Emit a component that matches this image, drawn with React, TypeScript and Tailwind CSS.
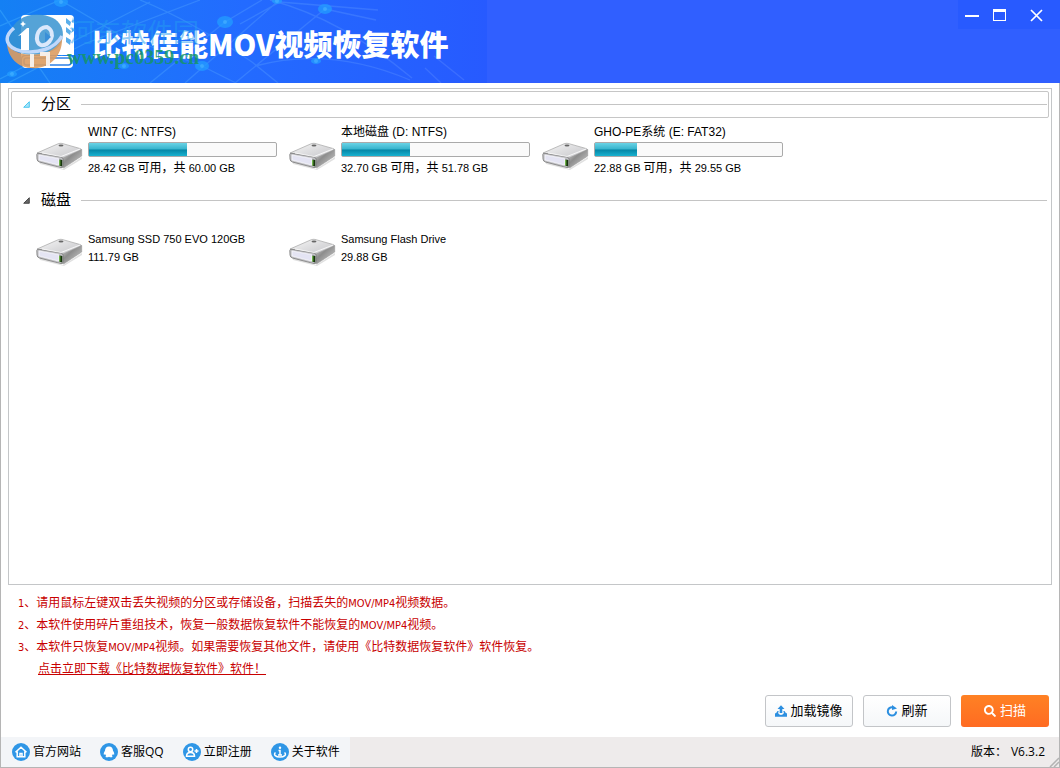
import React, { useState } from "react";
import { FaSearch } from "react-icons/fa";

const SANS = "font-['Liberation_Sans','Noto_Sans_CJK_SC',sans-serif]";
const UI = "font-['Open_Sans','Noto_Sans_CJK_SC',sans-serif]";

function Network() {
  const nodes = [
    [61, 2, 7], [124, 66, 5], [225, 22, 8], [202, 66, 7], [277, 1, 5], [325, 9, 7], [316, 61, 5], [12, 74, 5],
  ];
  return (
    <svg className="absolute inset-y-0 left-0 h-full w-[487px]" viewBox="0 0 487 83" fill="none" aria-hidden="true">
      <defs>
        <linearGradient id="fade" x1="0" x2="1">
          <stop offset="0" stopColor="#45b4ff" stopOpacity=".4" />
          <stop offset="1" stopColor="#6a94ff" stopOpacity=".3" />
        </linearGradient>
      </defs>
      <path
        stroke="url(#fade)"
        strokeWidth="1.3"
        d="M0 26L60 0M0 79L150 2M8 83L84 44L200 0M60 0L118 34L202 66L236 83M140 0Q190 20 252 62L278 83M150 83L225 22L262 0M185 83L277 2M235 83L325 9M270 0Q340 18 412 78M240 24L280 2L378 10M255 66Q330 46 410 80M325 9L376 20M425 68L441 83M434 56L464 80M0 10L50 83"
      />
      {nodes.map(([x, y, r]) => (
        <g key={x}>
          <ellipse cx={x} cy={y} rx={r} ry={r - 2} fill="#239cff" fillOpacity=".75" />
          <circle cx={x} cy={y} r="2" fill="#52bcff" fillOpacity=".5" />
        </g>
      ))}
    </svg>
  );
}

function Logo() {
  return (
    <svg className="h-[60px] w-[72px] shrink-0" viewBox="0 0 72 60" fill="none" aria-hidden="true">
      <path d="M20 1h45a4 4 0 0 1 4 4v36H20a4 4 0 0 0-4 4V5a4 4 0 0 1 4-4Z" fill="#fff" />
      <rect x="17" y="42" width="51" height="12" rx="4" fill="#fff" />
      <rect x="19" y="44" width="47" height="7" rx="2.500" fill="#fff" stroke="#2d80e6" strokeWidth="1.500" />
      <path d="M5 20C9 2 30-4 48 4c11 6 12 18 7 27-8 12-38 13-50 3-2-4-1-9 0-14Z" fill="#3793d0" fillOpacity=".85" />
      <path d="M2 30c6 10 22 13 38 9 9-3 15-9 17-16 1 15-8 29-25 31C14 56 3 44 2 30Z" fill="#dc9c62" fillOpacity=".9" />
      <path d="M9 14C-3 24 2 34 16 37c16 3 34-2 41-15" stroke="#c0d8fb" strokeWidth="3.500" />
      <path d="M24 14v22h-8V21l-3 1 9-8Z" fill="#fff" />
      <path d="M42 13c-11 0-13 16-6 18 9 2 16-13 6-18Z" stroke="#dbe8fb" strokeWidth="4" />
      <path d="M40 18v10l6-5Z" fill="#3a8fd8" />
      <path d="M27 40v13M35 40h8v12" stroke="#f6eee8" strokeWidth="4" />
      <path d="m18 7 1 2 2 1-2 1-1 2-1-2-2-1 2-1Z" fill="#fff" />
      <path d="m61 4 5 4-1 4-4-3Zm7-1-1 6 2-2Zm-7 10 5 4-1 4-4-3Zm7 0-2 6 3-2Zm-7 10 5 3-1 5-4-3Z" fill="#5aaeea" />
    </svg>
  );
}

function DriveIcon() {
  return (
    <svg className="h-[28px] w-[48px] shrink-0" viewBox="0 0 48 28" aria-hidden="true">
      <defs>
        <linearGradient id="driveTop" x1="0" y1="0" x2="1" y2="1">
          <stop offset="0" stopColor="#f7f7f7" />
          <stop offset=".5" stopColor="#dcdcde" />
          <stop offset="1" stopColor="#c4c4c8" />
        </linearGradient>
        <linearGradient id="driveSide" x1="0" y1="0" x2="1" y2="1">
          <stop offset="0" stopColor="#e8e8e8" />
          <stop offset=".4" stopColor="#8c8c8c" />
          <stop offset="1" stopColor="#d4d4d4" />
        </linearGradient>
      </defs>
      <path d="M3 19 27 27 46 15v2L28 28 4 22Z" fill="#000" fillOpacity=".12" />
      <path d="M1 11 22 1.800Q24 1 26 1.400L44 6.500q2 .5 1 2L27 17Z" fill="url(#driveTop)" stroke="#a5a5a5" strokeWidth=".7" />
      <path d="M26 16.500 45.700 7.500V14L27.500 26Z" fill="url(#driveSide)" stroke="#999" strokeWidth=".6" />
      <path d="M.8 12.500Q.8 11 3 11.300L25 15q2.200.5 2.200 2.500V24q0 2-2.200 1.600L3.500 20Q1.200 19.500 1 17Z" fill="#c3c3c7" stroke="#777" strokeWidth=".8" />
      <path d="M3 13 22.500 16.500V23L3 18Z" fill="#e4e4f3" stroke="#fafaff" strokeWidth=".7" />
      <path d="M23.500 17.500 26.300 18v6.500l-2.800-.7Z" fill="#17340f" />
      <path d="M23.800 18v5.500" stroke="#6fc341" strokeWidth="1.100" />
      <ellipse cx="25" cy="3.500" rx="2.500" ry="1" fill="#666" />
      <path d="m6 11 19 3.500L44 7" stroke="#fff" strokeOpacity=".8" fill="none" />
    </svg>
  );
}

function Section({ title, active, children }: { title: string; active?: boolean; children: React.ReactNode }) {
  const [open, setOpen] = useState(true);
  return (
    <section>
      <button
        type="button"
        aria-expanded={open}
        onClick={() => setOpen(!open)}
        className={
          active
            ? "flex h-[27px] w-full items-center rounded-[2px] border border-[#c6c6c6] bg-white pl-[11px] text-left"
            : "flex h-[27px] w-full items-center border border-transparent pl-[11px] text-left"
        }
      >
        <svg className="h-[7px] w-[7px]" viewBox="0 0 7 7" aria-hidden="true">
          <path d="M6.300.7v5.600H.7Z" fill={active ? "#a8e4fa" : "#686868"} stroke={active ? "#29bdec" : "#303030"} strokeWidth=".8" />
        </svg>
        <span className="ml-[11px] w-10 pb-0.5 text-[15px] leading-5 text-black">{title}</span>
        <span className="mr-px h-px flex-1 bg-[#c4c4c4]" />
      </button>
      {open && children}
    </section>
  );
}

const partitions = [
  { name: "WIN7 (C: NTFS)", free: "28.42 GB", total: "60.00 GB", used: 52.5 },
  { name: "本地磁盘 (D: NTFS)", free: "32.70 GB", total: "51.78 GB", used: 36.5 },
  { name: "GHO-PE系统 (E: FAT32)", free: "22.88 GB", total: "29.55 GB", used: 22.5 },
];

const disks = [
  { name: "Samsung SSD 750 EVO 120GB", size: "111.79 GB" },
  { name: "Samsung Flash Drive", size: "29.88 GB" },
];

function Latin({ children }: { children: React.ReactNode }) {
  return <span className="font-['DejaVu_Sans_Condensed','Noto_Sans',sans-serif] text-[11px] leading-none">{children}</span>;
}

function Badge({ children }: { children: React.ReactNode }) {
  return (
    <svg className="h-[18px] w-[18px]" viewBox="0 0 18 18" fill="none" aria-hidden="true">
      <circle cx="9" cy="9" r="9" fill="#2f96e6" />
      {children}
    </svg>
  );
}

const links = [
  {
    label: "官方网站",
    icon: <path d="m3.500 9.300 5.500-5 5.500 5M5.200 8.500v5.300h7.600V8.500M8 13.500v-3h2v3" stroke="#fff" strokeWidth="1.500" />,
  },
  {
    label: "客服QQ",
    icon: <path d="M9 3.500c-2.800 0-4 2-4 4.300-.9 1.300-1.600 3-1.100 4 .4.200.9-.3 1.200-.7.200.8.600 1.300 1.100 1.800-.8.300-1 1-.2 1.300 1 .3 2.200.1 3-.4.800.5 2 .7 3 .4.800-.3.600-1-.2-1.300.5-.5.900-1 1.100-1.800.3.400.8.900 1.200.7.500-1-.2-2.700-1.100-4 0-2.300-1.200-4.300-4-4.300Z" fill="#fff" />,
  },
  {
    label: "立即注册",
    icon: (
      <>
        <circle cx="7.500" cy="6.500" r="2.200" stroke="#fff" strokeWidth="1.500" />
        <path d="M3.500 13.200c0-2.600 1.500-3.700 4-3.700s4 1.100 4 3.700ZM11.500 8h4M13.500 6v4" stroke="#fff" strokeWidth="1.500" />
      </>
    ),
  },
  {
    label: "关于软件",
    icon: (
      <>
        <circle cx="9" cy="4.700" r="1.200" fill="#fff" />
        <path d="M7.500 7.500H9V12m-2 0h4M4.500 9.500c-2.500 2.300.3 4.500 4.500 4.500s7-2.200 4.500-4.500" stroke="#fff" strokeWidth="1.500" />
      </>
    ),
  },
];

const plainButton =
  "flex h-8 w-[88px] items-center justify-center rounded-[3px] border border-[#c3c5c8] bg-linear-to-b from-white to-[#f5f7f9] text-[13px] text-black";

export default function App() {
  return (
    <div className={`flex min-h-screen flex-col bg-white text-black ${SANS}`}>
      <header className="relative flex h-[83px] justify-between bg-[#305fff]">
        <div className="relative flex w-[487px] items-start bg-linear-to-r from-[#1480f4] via-[#236bff] via-50% to-[#275aff] pt-[14px] pl-[5px]">
          <Network />
          <div className="relative flex">
            <Logo />
            <h1 className="ml-[15px] pt-[9px] font-['Noto_Sans_CJK_SC',sans-serif] text-[29px] leading-10 font-black whitespace-nowrap text-white">
              比特佳能MOV视频恢复软件
            </h1>
            <span className="absolute top-[3px] left-[64px] text-[26px] leading-8 whitespace-nowrap text-[#249cf0]/50">河东软件园</span>
            <span className="absolute top-[33px] left-[62px] font-['Liberation_Serif',serif] text-[20px] leading-5 font-bold whitespace-nowrap text-[#149568]/85">
              www.pc0359.cn
            </span>
          </div>
        </div>
        <div className="flex h-[29px] w-[102px] bg-[#285aff]">
          <button type="button" aria-label="最小化" className="flex w-7 items-center justify-center">
            <svg className="h-4 w-4" viewBox="0 0 16 16" aria-hidden="true"><path d="M1 8h14v2H1Z" fill="#fff" /></svg>
          </button>
          <button type="button" aria-label="最大化" className="flex w-7 items-center justify-center">
            <svg className="h-4 w-4" viewBox="0 0 16 16" aria-hidden="true"><path fillRule="evenodd" d="M1 2h13v12H1ZM2 5v8h11V5Z" fill="#fff" /></svg>
          </button>
          <button type="button" aria-label="关闭" className="flex flex-1 items-center justify-center">
            <svg className="h-4 w-4" viewBox="0 0 16 16" aria-hidden="true"><path d="M2 3l11 11M13 3 2 14" stroke="#fff" strokeWidth="1.700" /></svg>
          </button>
        </div>
      </header>

      <div className="flex flex-1 flex-col border-x border-b border-[#b5b5b5]">
        <main className="flex flex-1 flex-col pt-[5px]">
          <div className="mx-[7px] flex-1 border border-[#c4c6c8] p-0.5">
            <Section title="分区" active>
              <ul className="flex flex-wrap pt-1.5 pb-[11px] pl-[25px]">
                {partitions.map((p) => (
                  <li key={p.name} className="w-[253px]">
                    <button type="button" className="flex text-left">
                      <span className="mt-[18px] mr-1"><DriveIcon /></span>
                      <span className="block">
                        <span className="block text-[12px] leading-4">{p.name}</span>
                        <span
                          role="progressbar"
                          aria-label={p.name}
                          aria-valuenow={p.used}
                          className="mt-0.5 block h-[15px] w-[189px] rounded-[2px] border border-[#aaaaaa] bg-[#fafafa]"
                        >
                          <span
                            className="block h-full bg-[linear-gradient(to_bottom,#6ad3e6_0%,#36b3cc_48%,#0585a5_52%,#18b2d0_100%)]"
                            style={{ width: `${p.used}%` }}
                          />
                        </span>
                        <span className="mt-[3px] block text-[11px] leading-4">
                          {p.free} <span className="text-[12px] leading-none">可用，共</span> {p.total}
                        </span>
                      </span>
                    </button>
                  </li>
                ))}
              </ul>
            </Section>
            <Section title="磁盘">
              <ul className="flex flex-wrap pt-[17px] pl-[25px]">
                {disks.map((d) => (
                  <li key={d.name} className="w-[253px]">
                    <button type="button" className="flex text-left text-[11px] leading-4">
                      <span className="mt-[7px] mr-1"><DriveIcon /></span>
                      <span>
                        <span className="block">{d.name}</span>
                        <span className="mt-0.5 block">{d.size}</span>
                      </span>
                    </button>
                  </li>
                ))}
              </ul>
            </Section>
          </div>

          <div className="pt-1.5 pl-[17px] font-['Noto_Sans_CJK_SC',sans-serif] text-[12px] leading-[22px] text-[#c80000]">
            <p><Latin>1</Latin>、请用鼠标左键双击丢失视频的分区或存储设备，扫描丢失的<Latin>MOV/MP4</Latin>视频数据。</p>
            <p><Latin>2</Latin>、本软件使用碎片重组技术，恢复一般数据恢复软件不能恢复的<Latin>MOV/MP4</Latin>视频。</p>
            <p><Latin>3</Latin>、本软件只恢复<Latin>MOV/MP4</Latin>视频。如果需要恢复其他文件，请使用《比特数据恢复软件》软件恢复。</p>
            <p className="pl-5"><a href="#download" className="underline">点击立即下载《比特数据恢复软件》软件！</a></p>
          </div>

          <div className={`flex justify-end gap-[10px] pt-4 pr-[10px] pb-[10px] ${UI}`}>
            <button type="button" className={plainButton}>
              <svg className="mr-[3px] h-3 w-3" viewBox="0 0 12 12" aria-hidden="true">
                <path d="M6 .3 9.500 4H7.300v4H4.700V4H2.500Z" fill="#2c8fe0" />
                <path d="M0 8.300h3.300q.8 1.700 2.700 1.700t2.700-1.700H12v3.400H0ZM1 8.300 2.500 6h1.200L3 8.300Zm10 0L9.500 6H8.300L9 8.300Z" fill="#2c8fe0" />
              </svg>
              加载镜像
            </button>
            <button type="button" className={plainButton}>
              <svg className="mr-[3px] h-3 w-3" viewBox="0 0 12 12" aria-hidden="true">
                <path d="M6.500 2.200A4.200 4.200 0 1 0 10.200 6.500" fill="none" stroke="#2c8fe0" strokeWidth="2" />
                <path d="M6 0v5l5-1.500Z" fill="#2c8fe0" />
              </svg>
              刷新
            </button>
            <button
              type="button"
              className="flex h-8 w-[88px] items-center justify-center rounded-[3px] bg-linear-to-b from-[#ff8124] to-[#ff6b22] text-[13px] text-white"
            >
              <FaSearch className="mr-1 h-3 w-3" />
              扫描
            </button>
          </div>
        </main>

        <footer className={`relative flex h-[30px] items-stretch justify-between bg-[#eeebeb] text-[12px] ${UI}`}>
          <nav className="flex items-center gap-[19px] bg-[#f3f5f8] pr-[10px] pl-[11px]">
            {links.map((l) => (
              <a key={l.label} href="#" className="flex items-center gap-[3px] whitespace-nowrap">
                <Badge>{l.icon}</Badge>
                {l.label}
              </a>
            ))}
          </nav>
          <p className="flex items-center gap-1 pr-[14px]">
            <span>版本：</span>
            <span>V6.3.2</span>
          </p>
          <svg className="absolute right-0 bottom-0 h-[10px] w-[10px]" viewBox="0 0 10 10" aria-hidden="true">
            <path d="M1 10 10 1M5 10l5-5" stroke="#b3b3b3" strokeWidth="1.500" />
          </svg>
        </footer>
      </div>
    </div>
  );
}
